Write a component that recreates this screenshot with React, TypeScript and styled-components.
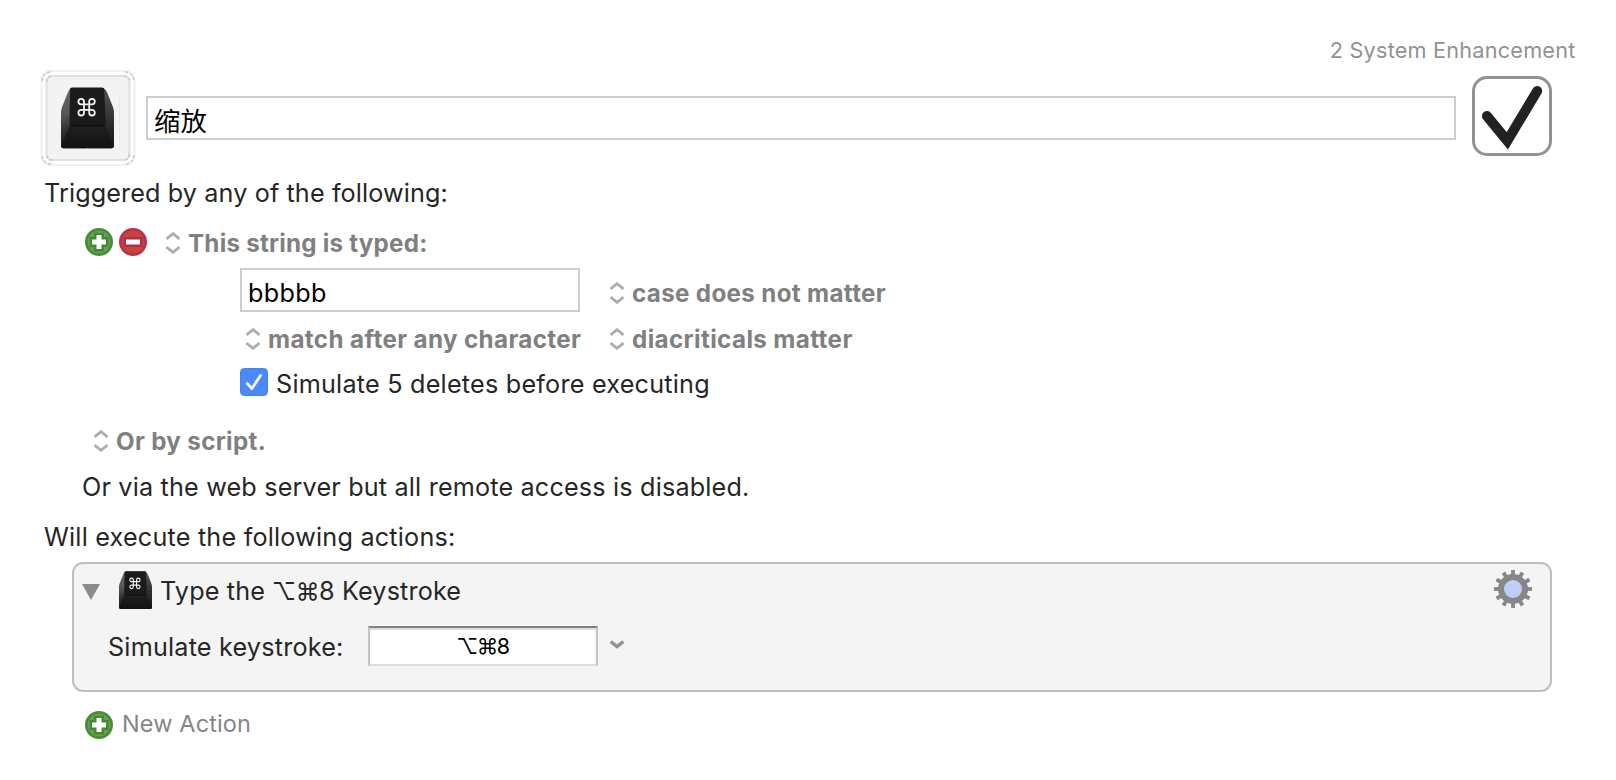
import React from 'react';
import styled, { createGlobalStyle } from 'styled-components';

const GlobalStyle = createGlobalStyle`
  *, *::before, *::after { box-sizing: border-box; }
  body {
    margin: 0;
    background: #fff;
    font-family: Inter, 'Noto Sans CJK SC', sans-serif;
  }
  svg { display: block; flex: none; }
`;

const Editor = styled.main`
  width: 1616px;
  height: 780px;
  padding: 36px 0 0;
  overflow: hidden;
  display: flex;
  flex-direction: column;
  color: #262626;
`;

/* ---------- text ---------- */

const Label = styled.span<{ $track?: number }>`
  font-size: 25.2px;
  line-height: 30px;
  white-space: pre;
  letter-spacing: ${(p) => p.$track ?? 0.2}px;
`;

const PopupLabel = styled.span<{ $track?: number }>`
  font-size: 24.2px;
  font-weight: 700;
  line-height: 28px;
  white-space: pre;
  color: #808080;
  letter-spacing: ${(p) => p.$track ?? 0.33}px;
`;

const GroupName = styled.div`
  height: 28px;
  padding-right: 40.5px;
  text-align: right;
  font-size: 21.7px;
  line-height: 28px;
  letter-spacing: 0.2px;
  color: #929292;
`;

const Heading = styled.h2<{ $top: number; $track: number }>`
  margin: ${(p) => p.$top}px 0 0 44px;
  font-weight: 400;
  font-size: 25.2px;
  line-height: 30px;
  letter-spacing: ${(p) => p.$track}px;
`;

const Modifiers = styled.span`
  font-size: 23.8px;
  letter-spacing: -0.5px;
  margin-left: -0.5px;
`;

/* ---------- header ---------- */

const Header = styled.header`
  display: flex;
  align-items: center;
  height: 100px;
  margin-top: 4px;
  padding-left: 40px;
`;

const NameInput = styled.input`
  width: 1310px;
  height: 44px;
  margin-left: 10px;
  padding: 2px 6px 0;
  border: 2px solid #cdcdcd;
  border-radius: 0;
  background: #fff;
  color: #000;
  font: 400 26.4px 'Noto Sans CJK SC', sans-serif;
  outline: none;
`;

const EnableButton = styled.button`
  width: 80px;
  height: 80px;
  margin: 0 0 4px 16px;
  padding: 0;
  border: 3px solid #929292;
  border-radius: 15px;
  background: #fff;

  svg { margin: -3px; }
`;

/* ---------- triggers ---------- */

const TriggerRow = styled.div`
  display: flex;
  align-items: center;
  gap: 6px;
  height: 28px;
  margin-top: 20px;
  padding-left: 85px;
`;

const Popup = styled.div<{ $indent?: number; $drop?: number }>`
  display: flex;
  align-items: center;
  gap: 8px;
  margin-left: ${(p) => p.$indent ?? 0}px;
  padding-top: ${(p) => p.$drop ?? 0}px;

  svg { margin-bottom: 2px; }
`;

const OptionGrid = styled.div`
  display: grid;
  grid-template-columns: 370px auto;
  grid-template-rows: 44px 28px;
  row-gap: 14px;
  justify-content: start;
  align-items: center;
  margin-top: 12px;
  padding-left: 240px;
`;

const StringInput = styled.input`
  width: 340px;
  height: 44px;
  padding: 5px 6px 0;
  border: 2px solid #cdcdcd;
  border-radius: 0;
  background: #fff;
  color: #000;
  font: 400 25.2px Inter, sans-serif;
  letter-spacing: 0.33px;
  outline: none;
`;

const CheckRow = styled.label`
  display: flex;
  align-items: center;
  gap: 8px;
  height: 28px;
  margin-top: 14px;
  padding-left: 240px;

  span { padding-top: 4px; }
`;

const ScriptRow = styled.div`
  display: flex;
  height: 28px;
  margin-top: 32px;
  padding-left: 94px;
`;

const RemoteNote = styled.p`
  margin: 16px 0 0 82px;
  font-size: 25.2px;
  line-height: 30px;
  letter-spacing: 0.175px;
`;

/* ---------- actions ---------- */

const ActionCard = styled.section`
  width: 1480px;
  height: 130px;
  margin: 10px 0 0 72px;
  padding-top: 6px;
  border: 2px solid #bfbfbf;
  border-radius: 11px;
  background: #f4f4f4;
`;

const ActionTitle = styled.div`
  display: flex;
  align-items: center;
  height: 40px;
  padding: 0 18px 0 8px;

  & > span { flex: 1; margin-left: 8px; padding-top: 3px; }
  & > svg:first-child { margin: 3px 19px 0 0; }
  & > svg:last-child { margin-bottom: 2px; }
`;

const ActionBody = styled.div`
  display: flex;
  align-items: center;
  height: 40px;
  margin-top: 16px;
  padding-left: 34px;

  & > span { width: 260px; padding-top: 2px; }
  & > svg { margin: 0 0 4px 12px; }
`;

const KeystrokeField = styled.div`
  width: 230px;
  height: 40px;
  padding-right: 1px;
  border: 2px solid;
  border-color: #828282 #c4c4c4 #dedede #c4c4c4;
  background: #fff;
  box-shadow: inset 0 2px 0 #dedede, inset 2px 0 0 #f8f8f8, inset -2px 0 0 #f8f8f8;
  color: #000;
  text-align: center;
  font-size: 21.5px;
  line-height: 36px;
  letter-spacing: -1.5px;
`;

const NewAction = styled.div`
  display: flex;
  align-items: center;
  gap: 9px;
  height: 28px;
  margin-top: 19px;
  padding-left: 85px;
  font-size: 23.5px;
  line-height: 26px;
  letter-spacing: 0.12px;
  color: #858585;

  span { padding-bottom: 2px; }
`;

/* ---------- icons ---------- */

function KeyShape({ id }: { id: string }) {
  return (
    <>
      <defs>
        <linearGradient id={`${id}-side`} x1="0" y1="0" x2="0.15" y2="1">
          <stop offset="0" stopColor="#6a6a6a" />
          <stop offset="0.45" stopColor="#555" />
          <stop offset="0.75" stopColor="#2c2c2c" />
          <stop offset="1" stopColor="#151515" />
        </linearGradient>
        <linearGradient id={`${id}-right`} x1="0" y1="0" x2="0" y2="1">
          <stop offset="0" stopColor="#555" />
          <stop offset="0.5" stopColor="#343434" />
          <stop offset="1" stopColor="#121212" />
        </linearGradient>
        <linearGradient id={`${id}-front`} x1="0" y1="0" x2="0" y2="1">
          <stop offset="0" stopColor="#222122" />
          <stop offset="1" stopColor="#121112" />
        </linearGradient>
      </defs>
      <path d="M10 .6Q8 2 6.500 6L1 20Q0 22.500 0 26V59q0 2 2 2h24V.6Z" fill={`url(#${id}-side)`} />
      <path d="M42.500 .6Q45 2 46.500 6L52 20q1 2.500 1 6V59q0 2-2 2H27V.6Z" fill={`url(#${id}-right)`} />
      <path d="M9 37 1.200 57Q.6 61 3 61h47q2.500 0 1.900-3L44 37Z" fill={`url(#${id}-front)`} />
      <path
        d="M11 0.300h30q2 0 2.300 2L44.500 34q0 4-4 4.600H12.500q-4-.4-4-4.600L9 2.300q0-2 2-2Z"
        fill="#1b1b1c"
      />
      <path d="M9 36q1 2.400 4 2.600h27q3-.2 4-2.600" fill="none" stroke="#050505" strokeWidth="1" />
      <path
        d="M23 17v-2.700a2.800 2.800 0 1 0-2.800 2.800H31a2.800 2.800 0 1 0-2.800-2.800V25.400a2.800 2.800 0 1 0 2.800-2.800H20.200a2.800 2.800 0 1 0 2.800 2.800Z"
        fill="none"
        stroke="#f4f4f4"
        strokeWidth="1.800"
      />
    </>
  );
}

function MacroIcon() {
  return (
    <svg width="96" height="96" viewBox="0 0 96 96">
      <rect x="1.500" y="1" width="93" height="94" rx="10" fill="#fff" stroke="#f0f0f0" strokeWidth="2" />
      <rect x="6.500" y="6" width="83" height="84" rx="6" fill="#f3f3f3" stroke="#e0e0e0" strokeWidth="2" />
      <g fill="none" stroke="#cacaca" strokeWidth="1.600" strokeDasharray="3 2">
        <path d="M2 11Q2.500 2.500 11 2M85 2Q93.500 2.500 94 11M94 85Q93.500 93.500 85 94M11 94Q2.500 93.500 2 85" />
        <path d="M6.500 12Q6.500 6 12.500 6M83.500 6Q89.500 6 89.500 12M89.500 84Q89.500 90 83.500 90M12.500 90Q6.500 90 6.500 84" />
      </g>
      <path d="M79.500 28V80" stroke="#e8e8e8" strokeWidth="1" />
      <g transform="translate(21 17.300)">
        <KeyShape id="macro" />
      </g>
    </svg>
  );
}

function KeyIcon() {
  return (
    <svg width="33" height="38" viewBox="0 0 53 61">
      <KeyShape id="action" />
    </svg>
  );
}

function Badge({ kind }: { kind: 'add' | 'remove' }) {
  const add = kind === 'add';
  return (
    <svg width="28" height="28" viewBox="0 0 28 28">
      <circle cx="14" cy="14" r="12.600" fill={add ? '#64a544' : '#c8453f'} stroke={add ? '#4b8b3a' : '#b9314a'} strokeWidth="2.800" />
      {add ? (
        <path d="M9 4.700h10V9h4.500v10H19v4.500H9V19H4.700V9H9Z" fill="#43883a" />
      ) : (
        <path d="M4.700 9h18.800v10H4.700Z" fill="#b02d4a" />
      )}
      <path
        d={add ? 'M11.500 7h5v4.500H21v5h-4.500V21h-5v-4.500H7v-5h4.500Z' : 'M7 11.500h14v5H7Z'}
        fill="#fff"
      />
    </svg>
  );
}

function Stepper() {
  return (
    <svg width="14" height="22" viewBox="0 0 14 22" fill="none" stroke="#adadad" strokeWidth="2.800">
      <path d="M.5 7 7 1.700l6.500 5.300M.5 15 7 20.300l6.500-5.300" />
    </svg>
  );
}

function Checkmark() {
  return (
    <svg width="80" height="80" viewBox="0 0 80 80" fill="none" stroke="#222" strokeWidth="10" strokeLinecap="round">
      <path d="M14.900 40 35.300 64.800 65.200 15" />
    </svg>
  );
}

function CheckboxIcon() {
  return (
    <svg width="28" height="28" viewBox="0 0 28 28">
      <rect width="28" height="28" rx="4.500" fill="#4583f2" />
      <rect x="1" y="1" width="26" height="26" rx="4" fill="#4b8af6" />
      <path d="m7.300 15.500 4.500 5.200L20.500 7.500" fill="none" stroke="#f4f8ff" strokeWidth="2.800" strokeLinecap="round" strokeLinejoin="round" />
    </svg>
  );
}

function Disclosure() {
  return (
    <svg width="18" height="16" viewBox="0 0 18 16">
      <path d="M0 0h18L9 16Z" fill="#8b8b8b" />
    </svg>
  );
}

function Gear() {
  const teeth = Array.from({ length: 12 }, (_, i) => i * 30);
  return (
    <svg width="38" height="38" viewBox="-19 -19 38 38">
      {teeth.map((a) => (
        <rect key={a} x="-1.900" y="-19" width="3.800" height="8" fill="#878787" transform={`rotate(${a})`} />
      ))}
      <circle r="15" fill="#878787" />
      <circle r="9" fill="#bbd0f3" />
    </svg>
  );
}

function Chevron() {
  return (
    <svg width="14" height="9" viewBox="0 0 14 9" fill="none" stroke="#929292" strokeWidth="3.400">
      <path d="M.6 1.500 7 6.600l6.400-5.100" />
    </svg>
  );
}

export default function App() {
  return (
    <>
      <GlobalStyle />
      <Editor>
        <GroupName>2 System Enhancement</GroupName>
        <Header>
          <MacroIcon />
          <NameInput defaultValue="缩放" aria-label="Macro name" />
          <EnableButton aria-label="Enabled">
            <Checkmark />
          </EnableButton>
        </Header>

        <Heading $top={10} $track={0.115}>Triggered by any of the following:</Heading>
        <TriggerRow>
          <Badge kind="add" />
          <Badge kind="remove" />
          <Popup $indent={13} $drop={4}>
            <Stepper />
            <PopupLabel $track={0.22}>This string is typed:</PopupLabel>
          </Popup>
        </TriggerRow>

        <OptionGrid>
          <StringInput defaultValue="bbbbb" aria-label="Typed string" />
          <Popup $drop={8}>
            <Stepper />
            <PopupLabel>case does not matter</PopupLabel>
          </Popup>
          <Popup $indent={6}>
            <Stepper />
            <PopupLabel $track={0.37}>match after any character</PopupLabel>
          </Popup>
          <Popup>
            <Stepper />
            <PopupLabel $track={0.38}>diacriticals matter</PopupLabel>
          </Popup>
        </OptionGrid>

        <CheckRow>
          <CheckboxIcon />
          <Label $track={0.22}>Simulate 5 deletes before executing</Label>
        </CheckRow>

        <ScriptRow>
          <Popup>
            <Stepper />
            <PopupLabel>Or by script.</PopupLabel>
          </Popup>
        </ScriptRow>
        <RemoteNote>Or via the web server but all remote access is disabled.</RemoteNote>

        <Heading $top={20} $track={0.207}>Will execute the following actions:</Heading>
        <ActionCard>
          <ActionTitle>
            <Disclosure />
            <KeyIcon />
            <Label $track={0.15}>
              Type the <Modifiers>⌥⌘</Modifiers>8 Keystroke
            </Label>
            <Gear />
          </ActionTitle>
          <ActionBody>
            <Label>Simulate keystroke:</Label>
            <KeystrokeField>⌥⌘8</KeystrokeField>
            <Chevron />
          </ActionBody>
        </ActionCard>

        <NewAction>
          <Badge kind="add" />
          <span>New Action</span>
        </NewAction>
      </Editor>
    </>
  );
}
